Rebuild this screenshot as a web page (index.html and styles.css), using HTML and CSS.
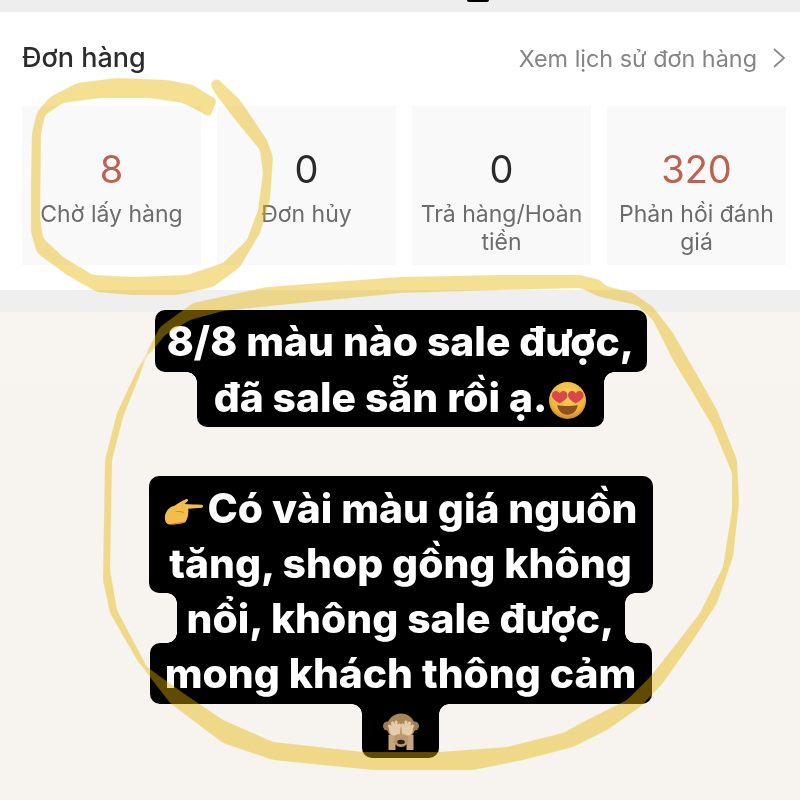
FILE: index.html
```html
<!DOCTYPE html>
<html lang="vi">
<head>
  <meta charset="UTF-8">
  <meta name="viewport" content="width=device-width, initial-scale=1.0">
  <title>Đơn hàng</title>
  <link rel="stylesheet" href="styles.css">
</head>
<body>
  <div class="page">
    <div class="top-band"><span class="top-blob"></span></div>

    <section class="orders">
      <div class="orders-head">
        <h2 class="orders-title">Đơn hàng</h2>
        <a class="orders-link">Xem lịch sử đơn hàng
          <svg class="chevron" width="14" height="22" viewBox="0 0 14 22"><path d="M2 2l10 9-10 9" fill="none" stroke="#8a8a8a" stroke-width="1.8"/></svg>
        </a>
      </div>
      <div class="cards">
        <div class="card"><div class="num red">8</div><div class="card-label">Chờ lấy hàng</div></div>
        <div class="card"><div class="num">0</div><div class="card-label">Đơn hủy</div></div>
        <div class="card"><div class="num">0</div><div class="card-label">Trả hàng/Hoàn tiền</div></div>
        <div class="card"><div class="num red">320</div><div class="card-label">Phản hồi đánh giá</div></div>
      </div>
    </section>

    <div class="divider"></div>

    <section class="story">
      <div class="block">
        <div class="line w-492 round pad-top">8/8 màu nào sale được,</div>
        <div class="line w-407 round-bottom notch">đã sale sẵn rồi ạ.<svg class="emoji" width="39" height="39" viewBox="0 0 40 40">
            <defs>
              <radialGradient id="face" cx="50%" cy="35%" r="65%"><stop offset="0" stop-color="#fbd35e"/><stop offset="0.75" stop-color="#f0b43c"/><stop offset="1" stop-color="#c9842a"/></radialGradient>
            </defs>
            <circle cx="20" cy="20" r="19" fill="url(#face)"/>
            <path d="M12 12.500c-3-4-8-2-8 2 0 3.500 4 6 8 8.500 4-2.500 8-5 8-8.500 0-4-5-6-8-2zM28.500 12.500c-3-4-8-2-8 2 0 3.500 4 6 8 8.500 4-2.500 8-5 8-8.500 0-4-5-6-8-2z" fill="#d9474a"/>
            <path d="M9.500 24.500c6 1.500 15 1.500 21 0-1 6.500-5 10-10.500 10s-9.500-3.500-10.500-10z" fill="#8a5220"/>
          </svg></div>
      </div>

      <div class="block">
        <div class="line w-504 round-top pad-top-lg"><svg class="hand" width="40" height="28" viewBox="0 0 42 29">
            <path d="M1 19c1-6 5-10 10-11 3-2 7-5 12-7 2-.5 3 1 1.500 2.500l-3 2.500c6 .5 13 .5 18 .8 2 .2 2 3 0 3.200l-14 1c.5 5-.5 11-3 14-3 2-12 3-17 2.500C2 27 .5 23 1 19z" fill="#f3bd4e"/>
            <path d="M9 27c4-1 9-1 13-2M13 14c2 0 6 0 8 1" fill="none" stroke="#c98a2a" stroke-width="1"/>
          </svg>Có vài màu giá nguồn</div>
        <div class="line w-504 round-bottom">tăng, shop gồng không</div>
        <div class="line w-448 notch notch-both short">nổi, không sale được,</div>
        <div class="line w-502 round raised">mong khách thông cảm</div>
        <div class="line w-77 round-bottom notch monkey"><svg width="38" height="37" viewBox="0 0 36 37">
            <circle cx="4.500" cy="13" r="4.500" fill="#a07a50"/>
            <circle cx="31.500" cy="13" r="4.500" fill="#a07a50"/>
            <ellipse cx="18" cy="14" rx="14" ry="13.500" fill="#a9855a"/>
            <path d="M9 37V22M27 37V22" fill="none" stroke="#c7a67e" stroke-width="7"/>
            <ellipse cx="18" cy="26" rx="7.500" ry="8" fill="#b99a70"/>
            <ellipse cx="11" cy="17" rx="5" ry="5.500" fill="#e6cca8"/>
            <ellipse cx="25" cy="17" rx="5" ry="5.500" fill="#e6cca8"/>
            <path d="M11 20L6.500 13M12.500 19L9.500 10M14 19L13 9M15.500 20L16.500 12M25 20L29.500 13M23.500 19L26.500 10M22 19L23 9M20.500 20L19.500 12" fill="none" stroke="#e6cca8" stroke-width="3" stroke-linecap="round"/>
            <ellipse cx="18" cy="29" rx="3.800" ry="2.200" fill="#2e1b0e"/>
          </svg></div>
      </div>
    </section>

    <!-- marker scribbles drawn over the screenshot -->
    <svg class="marker" width="800" height="800" viewBox="0 0 800 800">
      <defs>
        <filter id="soften" filterUnits="userSpaceOnUse" x="0" y="0" width="800" height="800" color-interpolation-filters="sRGB">
          <feGaussianBlur stdDeviation="2"/>
          <feComponentTransfer><feFuncA type="linear" slope="5" intercept="-2"/></feComponentTransfer>
        </filter>
      </defs>
      <g filter="url(#soften)">
        <path d="M217 100L193 85 167 80 117 78 77 83 50 97 37 112 32 133 31 183 31 233 37 253 67 275 97 292 133 295 177 295 213 287 240 267 260 233 270 200 273 157 267 140 240 100 217 78 210 83 213 90 233 117 260 150 263 173 258 210 247 240 223 263 187 275 133 277 93 275 63 257 43 238 40 217 41 133 45 115 63 103 100 98 150 98 183 103 210 117Z"/>
        <path fill-rule="evenodd" d="M400 277L500 275 580 275 600 280 606 286 633 293 653 307 673 333 700 380 717 410 737 460 739 503 733 557 717 603 693 640 663 683 640 707 607 730 573 747 523 760 473 770 373 770 273 760 223 743 170 703 137 660 110 613 103 580 105 460 117 413 137 370 160 327 193 303 267 287ZM400 293L500 290 580 288 600 297 637 305 653 320 673 360 693 393 713 427 732 473 732 510 723 567 700 613 677 643 650 677 627 700 587 720 563 733 507 747 440 752 363 752 273 742 223 720 183 693 147 667 117 610 110 570 112 460 123 417 147 357 165 335 190 320 223 311 300 303Z"/>
      </g>
    </svg>
  </div>
</body>
</html>
```

FILE: styles.css
```css
* {
  box-sizing: border-box;
}

body {
  margin: 0;
  font-family: Inter, "Liberation Sans", sans-serif;
  background-color: #f7f4f0;
}

.page {
  position: relative;
  width: 800px;
  height: 800px;
  overflow: hidden;
  display: flex;
  flex-direction: column;
  background: linear-gradient(#f8f6f3, #f7f3ee);
  filter: blur(0.4px);
}

.top-band {
  height: 12px;
  background-color: #eeeeee;
}

.top-blob {
  display: block;
  width: 22px;
  height: 2px;
  margin-left: 467px;
  background-color: #000;
  border-radius: 0 0 11px 11px;
}

.orders {
  height: 278px;
  padding: 28px 14px 25px 22px;
  background-color: #ffffff;
  display: flex;
  flex-direction: column;
  justify-content: space-between;
}

.orders-head {
  display: flex;
  justify-content: space-between;
  align-items: center;
}

.orders-title {
  margin: 0;
  font-size: 27px;
  line-height: 36px;
  font-weight: 500;
  color: #2c2c2c;
}

.orders-link {
  display: flex;
  align-items: center;
  gap: 15px;
  font-size: 23.400px;
  color: #858585;
}

.cards {
  display: grid;
  grid-template-columns: repeat(4, 1fr);
  gap: 16px;
}

.card {
  height: 159px;
  padding: 40px 0 0;
  text-align: center;
  background-color: #f9f9fa;
}

.num {
  font-size: 38px;
  line-height: 46px;
  color: #2a2a2a;
}

.num.red {
  color: #bf6150;
}

.card-label {
  margin-top: 8px;
  font-size: 23px;
  line-height: 28px;
  color: #6c6c6c;
}

.divider {
  height: 22px;
  background-color: #efefef;
}

.story {
  display: flex;
  flex-direction: column;
  align-items: center;
  gap: 49px;
  margin-top: -2px;
  padding-left: 1px;
}

.block {
  display: flex;
  flex-direction: column;
  align-items: center;
}

.line {
  position: relative;
  height: 55px;
  font-size: 40.800px;
  line-height: 51px;
  font-weight: 800;
  text-align: center;
  white-space: nowrap;
  color: #ffffff;
  background-color: #000000;
}

.w-492 { width: 492px; }
.w-407 { width: 407px; }
.w-504 { width: 504px; }
.w-502 { width: 502px; }
.w-448 { width: 448px; }
.w-77 { width: 77px; }

.round { border-radius: 10px; }
.round-top { border-radius: 10px 10px 0 0; }
.round-bottom { border-radius: 0 0 10px 10px; }

.pad-top {
  height: 62px;
  padding-top: 6px;
}

.pad-top-lg {
  height: 62px;
  padding-top: 7px;
}

.short {
  height: 50px;
}

.raised {
  height: 61px;
  padding-top: 5px;
}

/* concave corners where a narrower line meets a wider one */
.notch::before,
.notch::after {
  content: "";
  position: absolute;
  top: 0;
  width: 10px;
  height: 10px;
}

.notch::before {
  left: -10px;
  background: radial-gradient(circle at 0 100%, transparent 9.5px, #000 10px);
}

.notch::after {
  right: -10px;
  background: radial-gradient(circle at 100% 100%, transparent 9.5px, #000 10px);
}

.notch-both::before,
.notch-both::after {
  height: 100%;
  background-repeat: no-repeat;
  background-size: 10px 10px;
}

.notch-both::before {
  background-image:
    radial-gradient(circle at 0 100%, transparent 9.5px, #000 10px),
    radial-gradient(circle at 0 0, transparent 9.5px, #000 10px);
  background-position: 0 0, 0 100%;
}

.notch-both::after {
  background-image:
    radial-gradient(circle at 100% 100%, transparent 9.5px, #000 10px),
    radial-gradient(circle at 100% 0, transparent 9.5px, #000 10px);
  background-position: 0 0, 0 100%;
}

.emoji {
  margin-left: 1px;
  vertical-align: -8px;
}

.hand {
  margin-right: 4px;
  vertical-align: -3px;
}

.monkey {
  height: 54px;
  display: flex;
  justify-content: center;
  padding-top: 9px;
}

.marker {
  position: absolute;
  top: 0;
  left: 0;
  pointer-events: none;
  fill: #e8b400;
  opacity: 0.42;
}
```
